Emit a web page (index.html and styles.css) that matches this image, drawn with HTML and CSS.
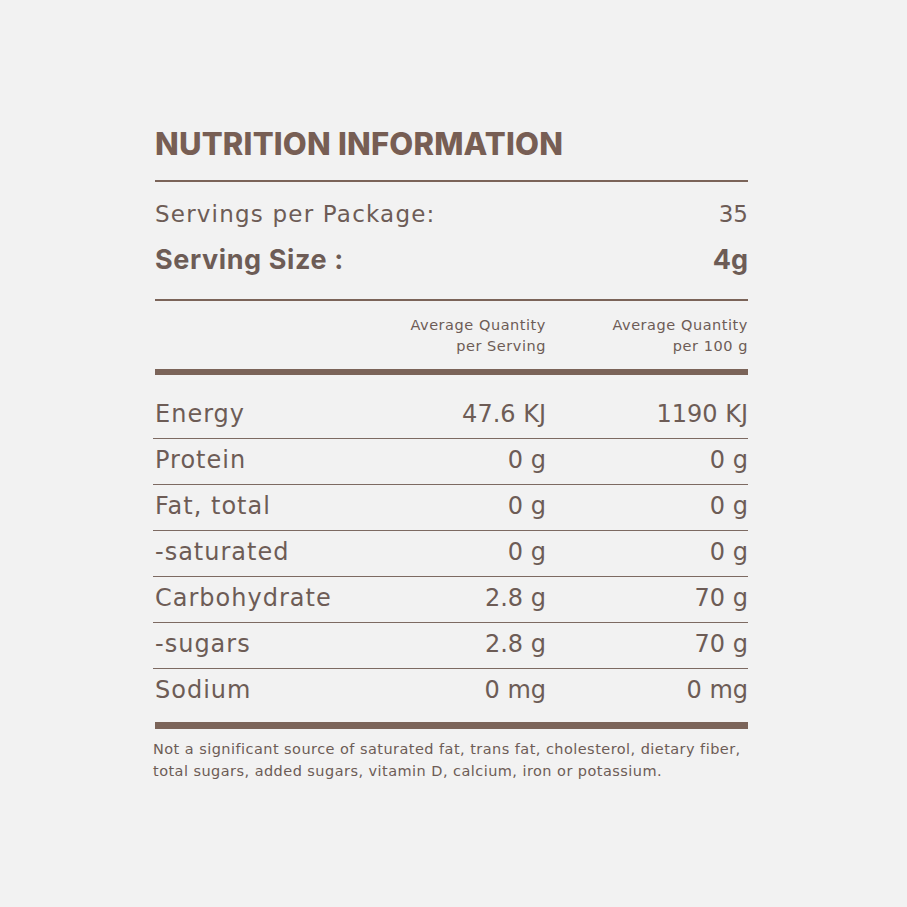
FILE: index.html
```html
<!DOCTYPE html>
<html lang="en">
<head>
<meta charset="utf-8">
<title>Nutrition Information</title>
<link rel="stylesheet" href="styles.css">
</head>
<body>
<main class="panel">
  <h1 class="title">NUTRITION INFORMATION</h1>
  <div class="rule"></div>
  <div class="serv">
    <div class="serv-row"><span>Servings per Package:</span><span>35</span></div>
    <div class="serv-row serv-size"><span>Serving Size :</span><span>4g</span></div>
  </div>
  <div class="rule"></div>
  <div class="head">
    <span></span>
    <span>Average Quantity<br>per Serving</span>
    <span>Average Quantity<br>per 100 g</span>
  </div>
  <div class="bar"></div>
  <div class="rows">
    <div class="row"><span>Energy</span><span>47.6 KJ</span><span>1190 KJ</span></div>
    <div class="row"><span>Protein</span><span>0 g</span><span>0 g</span></div>
    <div class="row"><span>Fat, total</span><span>0 g</span><span>0 g</span></div>
    <div class="row"><span>-saturated</span><span>0 g</span><span>0 g</span></div>
    <div class="row"><span>Carbohydrate</span><span>2.8 g</span><span>70 g</span></div>
    <div class="row"><span>-sugars</span><span>2.8 g</span><span>70 g</span></div>
    <div class="row"><span>Sodium</span><span>0 mg</span><span>0 mg</span></div>
  </div>
  <div class="bar bar-bottom"></div>
  <p class="note">Not a significant source of saturated fat, trans fat, cholesterol, dietary fiber,<br>total sugars, added sugars, vitamin D, calcium, iron or potassium.</p>
</main>
</body>
</html>
```
FILE: styles.css
```css
html, body {
  margin: 0;
  padding: 0;
  background: #f2f2f2;
}
body {
  font-family: "DejaVu Sans", Inter, sans-serif;
  color: #6d5c56;
}
.panel {
  width: 593px;
  margin-left: 155px;
  padding-top: 124px;
}
.title {
  margin: 0;
  font-family: Inter, sans-serif;
  font-size: 31px;
  line-height: 40px;
  font-weight: 800;
  color: #775e54;
  letter-spacing: 0.2px;
}
.rule {
  height: 2px;
  background: #7b6459;
  margin-top: 16px;
}
.serv {
  padding: 20px 0 24px;
}
.serv-row {
  display: flex;
  justify-content: space-between;
  font-size: 23px;
  line-height: 24px;
  letter-spacing: 1.2px;
}
.serv-size {
  margin-top: 19px;
  font-family: Inter, sans-serif;
  font-size: 27px;
  line-height: 30px;
  font-weight: 700;
  letter-spacing: 0.6px;
}
.serv-row span:last-child {
  letter-spacing: 0;
}
.serv + .rule {
  margin-top: 0;
}
.head {
  display: grid;
  grid-template-columns: 188px 203px 202px;
  text-align: right;
  font-size: 14.5px;
  line-height: 21px;
  letter-spacing: 0.55px;
  padding: 14px 0 12px;
}
.bar {
  height: 6px;
  background: #7b6459;
}
.bar-bottom {
  height: 7px;
}
.rows {
  padding: 18px 0 8px;
}
.row {
  display: grid;
  grid-template-columns: 188px 203px 202px;
  align-items: center;
  box-sizing: border-box;
  height: 46px;
  padding: 0 0 3px 2px;
  font-size: 24px;
  border-bottom: 1px solid #7d6a62;
  margin: 0 0 0 -2px;
}
.row:last-child {
  border-bottom: 0;
  height: 45px;
}
.row span:first-child {
  letter-spacing: 1px;
}
.row span:nth-child(n+2) {
  text-align: right;
}
.note {
  margin: 9px 0 0 -2px;
  font-size: 14.5px;
  line-height: 22px;
  letter-spacing: 0.45px;
}
```
